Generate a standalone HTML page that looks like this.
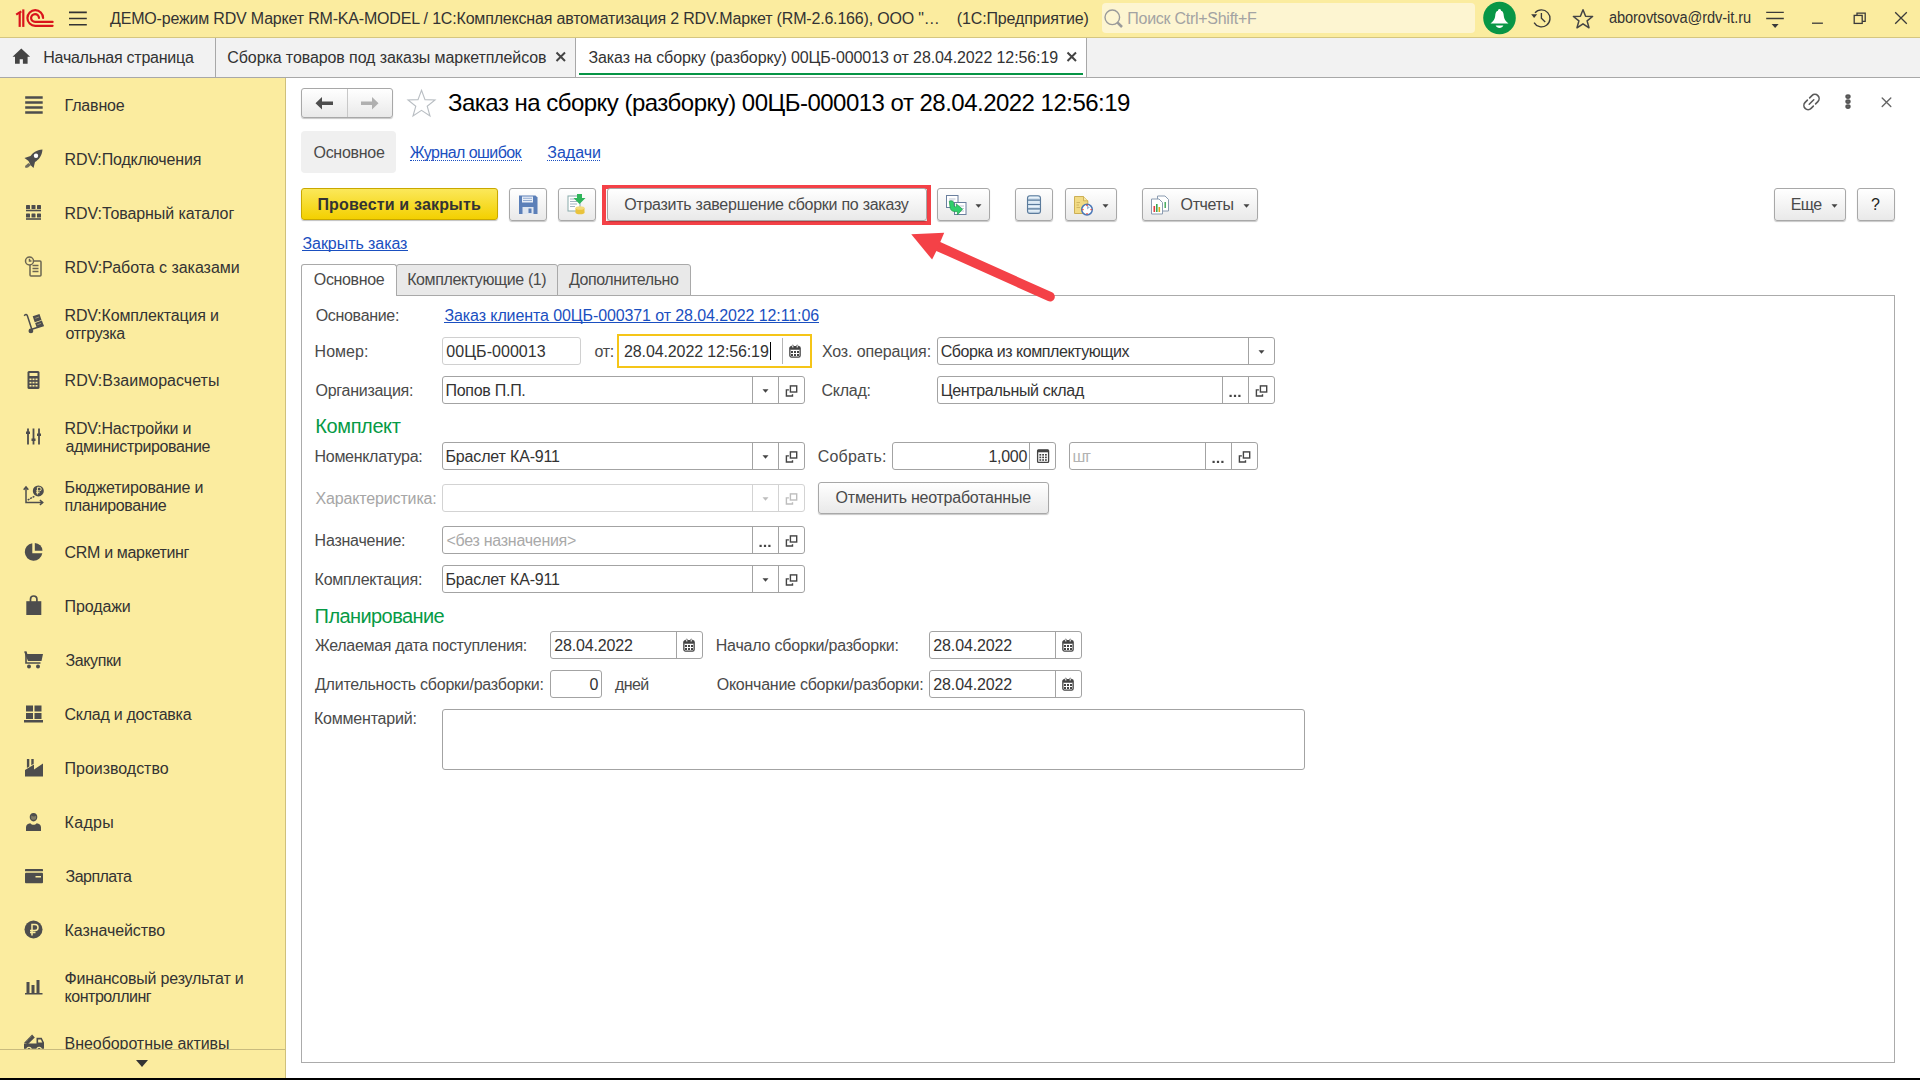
<!DOCTYPE html><html><head><meta charset="utf-8"><style>
*{box-sizing:border-box;margin:0;padding:0}
html,body{width:1920px;height:1080px;overflow:hidden;background:#fff;font-family:"Liberation Sans",sans-serif;font-size:16px;color:#4d4d4d}
.a{position:absolute}
.t{position:absolute;white-space:pre;line-height:18px;font-size:16px}
svg{position:absolute;overflow:visible}
</style></head><body>
<div class="a" style="left:0px;top:0px;width:1920px;height:37px;background:#fbec9f"></div>
<div class="a" style="left:0px;top:37px;width:1920px;height:1px;background:#d5c680"></div>
<svg style="left:0px;top:0px" width="120" height="38" viewBox="0 0 120 38">
<g fill="none" stroke="#d9141c" stroke-width="2.2">
<path d="M16.2 14.6 L21.3 11.3"/>
<path d="M19.7 12.6 V26.9"/>
<path d="M23.3 9.4 V26.9"/>
<path d="M43.1 18 A7.85 7.85 0 1 0 35.2 25.85 L52.6 25.85" stroke-linecap="round"/>
<path d="M39 18 A3.95 3.95 0 1 0 35.1 21.95 L52.6 21.95" stroke-linecap="round"/>
</g>
<g stroke="#333" stroke-width="1.6"><path d="M69 12.4H86.8M69 18.5H86.8M69 24.7H86.8"/></g>
</svg>
<div class="t" style="left:110.00px;top:10px;font-size:16px;color:#333;font-weight:400;letter-spacing:-0.182px;">ДЕМО-режим RDV Маркет RM-KA-MODEL / 1С:Комплексная автоматизация 2 RDV.Маркет (RM-2.6.166), ООО &quot;…</div>
<div class="t" style="left:956.80px;top:10px;font-size:16px;color:#333;font-weight:400;letter-spacing:-0.147px;">(1С:Предприятие)</div>
<div class="a" style="left:1102px;top:3px;width:373px;height:30px;background:#fdf5d1;border-radius:4px"></div>
<svg style="left:1100px;top:0px" width="30" height="38"><g fill="none" stroke="#9a9a9a"><circle cx="12.3" cy="17.3" r="7.3" stroke-width="1.4"/><path d="M17.6 22.6 L22 27" stroke-width="2.6"/></g></svg>
<div class="t" style="left:1127.30px;top:10px;font-size:16px;color:#a3a3a3;font-weight:400;letter-spacing:-0.271px;">Поиск Ctrl+Shift+F</div>
<svg style="left:1480px;top:0px" width="40" height="38"><circle cx="19.5" cy="18" r="16.3" fill="#089646"/>
<path d="M19.5 9 C18.5 9 18 9.8 18 10.8 C16 11.3 15.4 13 15.2 16 C15 19 13.5 21 10.5 23.6 H28.5 C25.5 21 24 19 23.8 16 C23.6 13 23 11.3 21 10.8 C21 9.8 20.5 9 19.5 9z" fill="#fff"/><path d="M15.6 25.6 H23.4 C22.7 27.3 21.2 28 19.5 28 C17.8 28 16.3 27.3 15.6 25.6z" fill="#fff"/></svg>
<svg style="left:1525px;top:0px" width="34" height="38"><g fill="none" stroke="#3a3a3a" stroke-width="1.35"><path d="M10 12.9 A8.5 8.5 0 1 1 9.1 22.6"/><path d="M16.4 13 V18.3 L20.2 22.1"/></g><path d="M6.2 14.2 L12.2 14.2 L9.1 18z" fill="#3a3a3a"/></svg>
<svg style="left:1568px;top:0px" width="32" height="38"><path d="M15 9.7 L17.6 16.3 L24.6 16.5 L19.1 20.9 L21 27.8 L15 23.8 L9 27.8 L10.9 20.9 L5.4 16.5 L12.4 16.3z" fill="none" stroke="#444" stroke-width="1.5" stroke-linejoin="round"/></svg>
<div class="t" style="left:1609.00px;top:9px;font-size:16px;color:#333;font-weight:400;letter-spacing:-0.100px;transform:scaleX(0.913);transform-origin:0 0">aborovtsova@rdv-it.ru</div>
<svg style="left:1760px;top:0px" width="32" height="38"><g stroke="#3a3a3a" stroke-width="1.4"><path d="M6.2 12.4H23.8M6.2 18.5H23.8"/></g><path d="M11.6 24 L18.6 24 L15.1 28z" fill="#3a3a3a"/></svg>
<svg style="left:1800px;top:0px" width="120" height="38"><g fill="none" stroke="#3a3a3a" stroke-width="1.3">
<path d="M12 23.2H22.9"/>
<rect x="54.2" y="15.4" width="8" height="8"/><path d="M57 15.4V13.1H65.2V21.3H62.2"/>
<path d="M95.2 12.2L106.8 23.8M106.8 12.2L95.2 23.8"/></g></svg>
<div class="a" style="left:0px;top:38px;width:1920px;height:39px;background:#f2f2f2"></div>
<div class="a" style="left:0px;top:77px;width:1920px;height:1px;background:#a8a8a8"></div>
<svg style="left:0px;top:38px" width="40" height="40"><path d="M21.3 10.6 L12.5 18.8 L15 18.8 L15 25.8 L19.7 25.8 L19.7 21.2 L22.9 21.2 L22.9 25.8 L27.6 25.8 L27.6 18.8 L30.1 18.8z" fill="#444"/></svg>
<div class="t" style="left:43.30px;top:49px;font-size:16px;color:#333;font-weight:400;letter-spacing:-0.253px;">Начальная страница</div>
<div class="a" style="left:215px;top:38px;width:1px;height:39px;background:#a8a8a8"></div>
<div class="t" style="left:227.30px;top:49px;font-size:16px;color:#333;font-weight:400;letter-spacing:-0.095px;">Сборка товаров под заказы маркетплейсов</div>
<svg style="left:550px;top:38px" width="20" height="40"><path d="M6.5 14.5L15 23M15 14.5L6.5 23" stroke="#444" stroke-width="2"/></svg>
<div class="a" style="left:575px;top:38px;width:1px;height:39px;background:#a8a8a8"></div>
<div class="a" style="left:576px;top:38px;width:510px;height:39px;background:#fff"></div>
<div class="t" style="left:588.50px;top:49px;font-size:16px;color:#333;font-weight:400;letter-spacing:-0.100px;">Заказ на сборку (разборку) 00ЦБ-000013 от 28.04.2022 12:56:19</div>
<svg style="left:1061px;top:38px" width="20" height="40"><path d="M6.5 14.5L15 23M15 14.5L6.5 23" stroke="#444" stroke-width="2"/></svg>
<div class="a" style="left:579px;top:73px;width:504px;height:2px;background:#069445"></div>
<div class="a" style="left:1086px;top:38px;width:1px;height:39px;background:#a8a8a8"></div>
<div class="a" style="left:0px;top:78px;width:285px;height:1000px;background:#fbec9f"></div>
<div class="a" style="left:285px;top:78px;width:1px;height:1000px;background:#cfc07c"></div>
<div class="t" style="left:64.60px;top:97px;font-size:16px;color:#333;font-weight:400;letter-spacing:-0.167px;">Главное</div>
<div class="t" style="left:64.60px;top:151px;font-size:16px;color:#333;font-weight:400;letter-spacing:-0.143px;">RDV:Подключения</div>
<div class="t" style="left:64.60px;top:205px;font-size:16px;color:#333;font-weight:400;letter-spacing:-0.074px;">RDV:Товарный каталог</div>
<div class="t" style="left:64.60px;top:259px;font-size:16px;color:#333;font-weight:400;letter-spacing:-0.035px;">RDV:Работа с заказами</div>
<div class="t" style="left:64.60px;top:307px;font-size:16px;color:#333;font-weight:400;letter-spacing:-0.165px;">RDV:Комплектация и</div>
<div class="t" style="left:65.60px;top:325px;font-size:16px;color:#333;font-weight:400;letter-spacing:-0.343px;">отгрузка</div>
<div class="t" style="left:64.60px;top:372px;font-size:16px;color:#333;font-weight:400;letter-spacing:0.019px;">RDV:Взаиморасчеты</div>
<div class="t" style="left:64.60px;top:420px;font-size:16px;color:#333;font-weight:400;letter-spacing:-0.186px;">RDV:Настройки и</div>
<div class="t" style="left:65.60px;top:438px;font-size:16px;color:#333;font-weight:400;letter-spacing:-0.369px;">администрирование</div>
<div class="t" style="left:64.60px;top:479px;font-size:16px;color:#333;font-weight:400;letter-spacing:-0.200px;">Бюджетирование и</div>
<div class="t" style="left:64.60px;top:497px;font-size:16px;color:#333;font-weight:400;letter-spacing:-0.391px;">планирование</div>
<div class="t" style="left:64.60px;top:544px;font-size:16px;color:#333;font-weight:400;letter-spacing:-0.336px;">CRM и маркетинг</div>
<div class="t" style="left:64.60px;top:598px;font-size:16px;color:#333;font-weight:400;letter-spacing:-0.117px;">Продажи</div>
<div class="t" style="left:65.60px;top:652px;font-size:16px;color:#333;font-weight:400;letter-spacing:-0.417px;">Закупки</div>
<div class="t" style="left:64.60px;top:706px;font-size:16px;color:#333;font-weight:400;letter-spacing:-0.280px;">Склад и доставка</div>
<div class="t" style="left:64.60px;top:760px;font-size:16px;color:#333;font-weight:400;letter-spacing:-0.027px;">Производство</div>
<div class="t" style="left:64.60px;top:814px;font-size:16px;color:#333;font-weight:400;letter-spacing:0.300px;">Кадры</div>
<div class="t" style="left:65.60px;top:868px;font-size:16px;color:#333;font-weight:400;letter-spacing:-0.543px;">Зарплата</div>
<div class="t" style="left:64.60px;top:922px;font-size:16px;color:#333;font-weight:400;letter-spacing:-0.082px;">Казначейство</div>
<div class="t" style="left:64.60px;top:970px;font-size:16px;color:#333;font-weight:400;letter-spacing:-0.195px;">Финансовый результат и</div>
<div class="t" style="left:64.60px;top:988px;font-size:16px;color:#333;font-weight:400;letter-spacing:-0.490px;">контроллинг</div>
<div class="t" style="left:64.60px;top:1035px;font-size:16px;color:#333;font-weight:400;letter-spacing:-0.067px;">Внеоборотные активы</div>
<svg style="left:0px;top:0px" width="286" height="1080"><g transform="translate(33.5,105.0)"><path d="M-8.3 -7.5H9.2M-8.3 -2.5H9.2M-8.3 2.5H9.2M-8.3 7.5H9.2" stroke="#4d4d4d" stroke-width="2.3"/></g><g transform="translate(33.5,159.0)"><path d="M9 -9.5 C3 -9 -1 -6 -3 -3 L-9 -1 L-5 2 L-3 6 L0 9 L1.5 3 C5 1 8.5 -3 9 -9.5z" fill="#4d4d4d"/><circle cx="2.5" cy="-3.3" r="2.2" fill="#fff"/><path d="M-5 4 L-8.5 7 L-8 9 L-5.5 8.5 L-2.5 6z" fill="#4d4d4d" opacity=".8"/></g><g transform="translate(33.5,213.0)"><rect x="-7.5" y="-8" width="4" height="4" rx=".6" fill="#4d4d4d"/><rect x="-2" y="-8" width="4" height="4" rx=".6" fill="#4d4d4d"/><rect x="3.5" y="-8" width="4" height="4" rx=".6" fill="#4d4d4d"/><rect x="-7.5" y="-3.3" width="15" height="1.6" fill="#4d4d4d"/><rect x="-7.5" y="0.5" width="4" height="4" rx=".6" fill="#4d4d4d"/><rect x="-2" y="0.5" width="4" height="4" rx=".6" fill="#4d4d4d"/><rect x="3.5" y="0.5" width="4" height="4" rx=".6" fill="#4d4d4d"/><rect x="-7.5" y="5.2" width="15" height="1.6" fill="#4d4d4d"/></g><g transform="translate(33.5,267.0)"><g fill="none" stroke="#6b6552" stroke-width="1.5"><rect x="-3.5" y="-6" width="11" height="15" rx="1"/><path d="M-1 -1.5H5M-1 1.5H5M-1 4.5H5"/><circle cx="-4" cy="-6" r="4" fill="#fbec9f"/><path d="M-4 -8.2V-6H-2"/></g></g><g transform="translate(33.5,323.5)"><g fill="none" stroke="#4d4d4d" stroke-width="1.5"><path d="M-9.2 -7.6 C-8.4 -9.4 -6.8 -9.2 -6.2 -8 L-1.8 5.6"/><path d="M-1.8 5.8 L10.2 2"/></g><g fill="#4d4d4d"><path d="M-0.8 -7.2 L6 -9.6 L8 -3.6 L1.2 -1.2z M1.6 -0.6 L8.4 -3 L10.2 2 L3.4 4.4z"/><circle cx="-2.6" cy="7.4" r="2.4"/></g><path d="M1.8 -5.2 L5.5 -6.5 M3.8 1.2 L7.5 -0.1" stroke="#fbec9f" stroke-width=".7" opacity=".6"/></g><g transform="translate(33.5,380.0)"><rect x="-6" y="-9" width="12" height="18" rx="1.5" fill="#4d4d4d"/><rect x="-4" y="-7" width="8" height="3" fill="#fbec9f"/><rect x="-4" y="-1.5" width="2" height="1.6" fill="#fbec9f"/><rect x="-1" y="-1.5" width="2" height="1.6" fill="#fbec9f"/><rect x="2" y="-1.5" width="2" height="1.6" fill="#fbec9f"/><rect x="-4" y="1.8" width="2" height="1.6" fill="#fbec9f"/><rect x="-1" y="1.8" width="2" height="1.6" fill="#fbec9f"/><rect x="2" y="1.8" width="2" height="1.6" fill="#fbec9f"/><rect x="-4" y="5" width="2" height="1.6" fill="#fbec9f"/><rect x="-1" y="5" width="2" height="1.6" fill="#fbec9f"/><rect x="2" y="5" width="2" height="1.6" fill="#fbec9f"/></g><g transform="translate(33.5,436.5)"><g stroke="#4d4d4d" stroke-width="1.8"><path d="M-5.5 -8V8M0 -8V8M5.5 -8V8"/></g><g fill="#4d4d4d"><rect x="-7.5" y="-5" width="4" height="2.5"/><rect x="-2" y="2" width="4" height="2.5"/><rect x="3.5" y="-3" width="4" height="2.5"/></g></g><g transform="translate(33.5,495.5)"><g fill="none" stroke="#4d4d4d" stroke-width="1.5"><path d="M-7.5 -8 V7 H9"/><path d="M-9.8 -5.8 L-7.5 -8.6 L-5.2 -5.8 M6.4 4.7 L9.2 7 L6.4 9.3"/><path d="M-5.8 4.5 L1.5 0.5" stroke-dasharray="2 .8"/></g><circle cx="4.8" cy="-4.6" r="5.5" fill="#4d4d4d"/><path d="M3.9 -1 V-8.2 H5.9 a1.8 1.8 0 0 1 0 3.6 H2.6 M2.6 -2.8 H6" stroke="#fbec9f" stroke-width="1" fill="none"/></g><g transform="translate(33.5,552.0)"><path d="M-1.2 -8.8 A8.8 8.8 0 1 0 8.8 1.2 L-1.2 1.2z" fill="#4d4d4d"/><path d="M1.3 -9 A8 8 0 0 1 9 -1.3 L1.3 -1.3z" fill="#4d4d4d"/></g><g transform="translate(33.5,606.0)"><rect x="-7.2" y="-4.8" width="15" height="13.8" fill="#4d4d4d"/><path d="M-3 -1.8 V-6.8 a3.2 3.2 0 0 1 6.4 0 V-1.8" fill="none" stroke="#4d4d4d" stroke-width="1.7"/></g><g transform="translate(33.5,660.0)"><path d="M-9.5 -8.5H-7.5L-6 -6H9.5L8 1H-5.5z" fill="#4d4d4d"/><path d="M-7.5 -8.5V3H7" stroke="#4d4d4d" stroke-width="1.6" fill="none"/><circle cx="-4.5" cy="6.5" r="2" fill="#4d4d4d"/><circle cx="4.5" cy="6.5" r="2" fill="#4d4d4d"/></g><g transform="translate(33.5,714.0)"><g fill="#4d4d4d"><rect x="-7.5" y="-8.5" width="7" height="6"/><rect x="1" y="-8.5" width="7" height="6"/><rect x="-7.5" y="-1" width="7" height="6"/><rect x="1" y="-1" width="7" height="6"/><rect x="-9.5" y="6" width="19" height="2.5"/></g></g><g transform="translate(33.5,768.0)"><path d="M-8.5 8.5 V2 L0.5 -3.5 V1.5 L9.5 -4.5 V8.5z" fill="#4d4d4d"/><path d="M-6.6 -9 H-4.2 V-1.6 L-6.6 -0.1z M-2.2 -9 H0.2 V-4.3 L-2.2 -2.8z" fill="#4d4d4d"/></g><g transform="translate(33.5,822.0)"><path d="M0 -9 C-2.6 -9 -3.8 -7.2 -3.8 -5 C-3.8 -2.6 -2.3 -0.6 0 -0.6 C2.3 -0.6 3.8 -2.6 3.8 -5 C3.8 -7.2 2.6 -9 0 -9z" fill="#4d4d4d"/><path d="M-2.2 -6.5 C-1 -5.2 1.3 -5 2.6 -6.2 L2.5 -3.5 C1.8 -1.8 -1.8 -1.8 -2.4 -3.5z" fill="#fbec9f" opacity=".3"/><path d="M-7.5 9 V5.3 C-7.5 3 -5.8 1.6 -3.2 1.2 C-2.2 2.3 -1.2 2.8 0 2.8 C1.2 2.8 2.2 2.3 3.2 1.2 C5.8 1.6 7.5 3 7.5 5.3 V9z" fill="#4d4d4d"/></g><g transform="translate(33.5,876.0)"><rect x="-8.5" y="-7" width="18" height="2.3" rx=".5" fill="#4d4d4d"/><rect x="-8.5" y="-3.2" width="18" height="10.4" rx="1" fill="#4d4d4d"/><rect x="2" y="0" width="5.5" height="1.5" fill="#fbec9f"/></g><g transform="translate(33.5,930.0)"><circle cx="0" cy="-0.5" r="9" fill="#4d4d4d"/><path d="M-1.5 5.5V-5.5H1.5a3 3 0 0 1 0 6H-3.5M-3.5 2.5H2" stroke="#fbec9f" stroke-width="1.5" fill="none"/></g><g transform="translate(33.5,986.5)"><g fill="#4d4d4d"><rect x="-7" y="-4.5" width="3" height="11"/><rect x="-2" y="-1.5" width="3" height="8"/><rect x="3" y="-6.5" width="3" height="13"/><rect x="-8.5" y="6.5" width="17.5" height="1.5"/></g></g><g transform="translate(33.5,1043.0)"><path d="M-9.5 0.5 H3 V-5.2 H8.2 L10.5 -0.5 V5.8 H-9.5z" fill="#4d4d4d"/><path d="M4.6 -3.6 H7.4 L8.8 -0.4 H4.6z" fill="#fbec9f"/><path d="M-9.4 -0.3 L-1.4 -8.6 L1.3 -5.6 L-5.6 1.2z" fill="#4d4d4d"/><path d="M-8 -0.8 L-1.6 -7.2" stroke="#fbec9f" stroke-width=".6" stroke-dasharray="1 1" opacity=".6"/><g fill="#fbec9f"><circle cx="-4.5" cy="6.4" r="2.7"/><circle cx="5.6" cy="6.4" r="2.7"/></g><g fill="#4d4d4d"><circle cx="-4.5" cy="6.6" r="1.7"/><circle cx="5.6" cy="6.6" r="1.7"/></g></g></svg>
<div class="a" style="left:0px;top:1049px;width:285px;height:29px;background:#fbec9f"></div>
<div class="a" style="left:0px;top:1049px;width:285px;height:1px;background:#c9bb7e"></div>
<svg style="left:130px;top:1055px" width="24" height="16"><path d="M6 5H18L12 12z" fill="#333"/></svg>
<div class="a" style="left:301px;top:88px;width:92px;height:30px;border:1px solid #a8a8a8;border-radius:3px;background:linear-gradient(#ffffff,#e9e9e9);box-shadow:0 1px 1px rgba(0,0,0,.22)"></div>
<div class="a" style="left:347px;top:89px;width:1px;height:28px;background:#c8c8c8"></div>
<svg style="left:301px;top:88px" width="92" height="31"><path d="M14.5 15.2 L21 9 V13.5 H32 V17 H21 V21.5z" fill="#4d4d4d"/><path d="M77.5 15.2 L71 9 V13.5 H60 V17 H71 V21.5z" fill="#b0b0b0"/></svg>
<svg style="left:405px;top:86px" width="34" height="34"><path d="M16.5 4.3 L20 13.6 L30 13.9 L22.2 20.2 L25 30 L16.5 24.4 L8 30 L10.8 20.2 L3 13.9 L13 13.6z" fill="none" stroke="#b9bec3" stroke-width="1.1" stroke-linejoin="miter"/></svg>
<div class="t" style="left:448.00px;top:94px;font-size:24px;color:#000;font-weight:400;letter-spacing:-0.517px;">Заказ на сборку (разборку) 00ЦБ-000013 от 28.04.2022 12:56:19</div>
<svg style="left:1795px;top:88px" width="100" height="30"><g fill="none" stroke="#555" stroke-width="1.6" stroke-linecap="round">
<g transform="translate(16.5,14) rotate(-45)" fill="none" stroke="#5a5a5a" stroke-width="1.6"><path d="M-1.6 -4.2 H-4.8 A4.2 4.2 0 0 0 -4.8 4.2 H-1.6"/><path d="M1.6 -4.2 H4.8 A4.2 4.2 0 0 1 4.8 4.2 H1.6"/><path d="M-3.2 0 H3.2"/></g>
<g fill="#6a6a6a"><ellipse cx="53" cy="8.6" rx="1.9" ry="1.5"/><ellipse cx="53" cy="13.6" rx="1.9" ry="1.5"/><ellipse cx="53" cy="18.6" rx="1.9" ry="1.5"/></g>
<path d="M87.2 10 L95.8 18.4 M95.8 10 L87.2 18.4" stroke="#666" stroke-width="1.4"/></svg>
<div class="a" style="left:301px;top:131px;width:95px;height:42px;background:#f0f0f0;border-radius:4px"></div>
<div class="t" style="left:313.50px;top:144px;font-size:16px;color:#4a4a4a;font-weight:400;letter-spacing:-0.286px;">Основное</div>
<div class="t" style="left:409.80px;top:144px;font-size:16px;color:#1a4fc0;font-weight:400;letter-spacing:-0.567px;">Журнал ошибок</div>
<div class="a" style="left:410px;top:160px;width:112px;height:1px;border-top:1px dotted #1a4fc0"></div>
<div class="t" style="left:547.30px;top:144px;font-size:16px;color:#1a4fc0;font-weight:400;letter-spacing:-0.020px;">Задачи</div>
<div class="a" style="left:547px;top:160px;width:53px;height:1px;border-top:1px dotted #1a4fc0"></div>
<div class="a" style="left:301px;top:188px;width:197px;height:32px;border:1px solid #c9a800;border-radius:3px;background:linear-gradient(#fbe85a,#f3d000);box-shadow:0 1px 1px rgba(0,0,0,.25)"></div>
<div class="t" style="left:317.40px;top:196px;font-size:16px;color:#333;font-weight:700;letter-spacing:0.176px;">Провести и закрыть</div>
<div class="a" style="left:509px;top:188px;width:38px;height:33px;border:1px solid #a8a8a8;border-radius:3px;background:linear-gradient(#ffffff,#e9e9e9);box-shadow:0 1px 1px rgba(0,0,0,.22)"></div>
<svg style="left:509px;top:188px" width="38" height="33"><path d="M10 7.5 H26.5 L28.5 9.5 V26 H10z" fill="#5b7fb8"/><rect x="13" y="8.5" width="11" height="6" fill="#e8eef7"/><path d="M14 10.3H23M14 12.5H23" stroke="#7d9ac6" stroke-width=".8"/><rect x="13.5" y="19" width="11" height="7" fill="#dfe6f0"/><rect x="19.5" y="20.5" width="3" height="4.5" fill="#5b7fb8"/></svg>
<div class="a" style="left:558px;top:188px;width:38px;height:33px;border:1px solid #a8a8a8;border-radius:3px;background:linear-gradient(#ffffff,#e9e9e9);box-shadow:0 1px 1px rgba(0,0,0,.22)"></div>
<svg style="left:558px;top:188px" width="38" height="33"><rect x="10" y="8" width="12" height="15" fill="#fff" stroke="#8aa" stroke-width="1"/><path d="M12 11H19M12 13.5H19M12 16H19M12 18.5H17" stroke="#9ab" stroke-width=".9"/><ellipse cx="22" cy="24.5" rx="4.5" ry="1.8" fill="#e9c33d"/><rect x="17.5" y="20" width="9" height="4.5" fill="#e9c33d"/><ellipse cx="22" cy="20" rx="4.5" ry="1.8" fill="#f3da7a"/><path d="M19 6 H24 V10 H27.5 L21.5 16 L15.5 10 H19z" fill="#2fb55a"/></svg>
<div class="a" style="left:602px;top:185px;width:329px;height:40px;border:4px solid #f44147"></div>
<div class="a" style="left:607px;top:188px;width:320px;height:33px;border:1px solid #a8a8a8;border-radius:3px;background:linear-gradient(#ffffff,#e9e9e9);box-shadow:0 1px 1px rgba(0,0,0,.22)"></div>
<div class="t" style="left:624.20px;top:196px;font-size:16px;color:#4a4a4a;font-weight:400;letter-spacing:-0.263px;">Отразить завершение сборки по заказу</div>
<div class="a" style="left:937px;top:188px;width:53px;height:33px;border:1px solid #a8a8a8;border-radius:3px;background:linear-gradient(#ffffff,#e9e9e9);box-shadow:0 1px 1px rgba(0,0,0,.22)"></div>
<svg style="left:937px;top:188px" width="53" height="33"><rect x="9.5" y="7.5" width="11.5" height="12" fill="#fff" stroke="#6a7f9e" stroke-width="1"/><path d="M12 11H18.5M12 13H17" stroke="#aab6c8" stroke-width=".8"/><rect x="17.5" y="14.5" width="11.5" height="12" fill="#fff" stroke="#6a7f9e" stroke-width="1"/><path d="M22 18H27M22 20.5H27M22 23H27" stroke="#aab6c8" stroke-width=".8"/><path d="M12.3 13.2 C14.5 12.3 16.5 13 16.7 15 L16.8 17.6 C17 18.8 18 19 19.5 18.6 L19.2 15.8 L25.5 21.2 L20.5 26.8 L20.4 23.5 C15.8 24.2 13.2 22.3 13 19z" fill="#2fcf6a" stroke="#1f9a4a" stroke-width=".7"/></svg>
<svg style="left:974.5px;top:201.6px" width="8" height="6"><path d="M0.5 2.2H6.5L3.5 5.7z" fill="#444"/></svg>
<div class="a" style="left:1015px;top:188px;width:38px;height:33px;border:1px solid #a8a8a8;border-radius:3px;background:linear-gradient(#ffffff,#e9e9e9);box-shadow:0 1px 1px rgba(0,0,0,.22)"></div>
<svg style="left:1015px;top:188px" width="38" height="33"><rect x="12.5" y="7.8" width="13" height="17.6" rx="2.5" fill="#cfe0ef" stroke="#5b7b9c" stroke-width="1.1"/><path d="M12.8 12.1H25.2M12.8 16.5H25.2M12.8 20.9H25.2" stroke="#5b7b9c" stroke-width="1.1"/><path d="M13.8 9.6H24.2M13.8 14H24.2M13.8 18.4H24.2M13.8 22.8H24.2" stroke="#f2f7fb" stroke-width=".9"/></svg>
<div class="a" style="left:1065px;top:188px;width:52px;height:33px;border:1px solid #a8a8a8;border-radius:3px;background:linear-gradient(#ffffff,#e9e9e9);box-shadow:0 1px 1px rgba(0,0,0,.22)"></div>
<svg style="left:1065px;top:188px" width="52" height="33"><path d="M9.5 8.5 H18.5 L22.8 12.8 V25.5 H9.5z" fill="#f2db84" stroke="#c7a84a" stroke-width=".9"/><path d="M18.5 8.5 V12.8 H22.8" fill="#f7e7a8" stroke="#c7a84a" stroke-width=".8"/><path d="M11.5 14.5H15M11.5 17H14M11.5 19.5H15" stroke="#c9ad5a" stroke-width=".8"/><circle cx="22" cy="21.6" r="5.3" fill="#fff" stroke="#4a78b8" stroke-width="1.5"/><path d="M22 17.6 V21.6 L24.8 19.5z" fill="#9fb7d9"/><g fill="#e43"><circle cx="22" cy="17.4" r=".8"/><circle cx="26.1" cy="21.6" r=".8"/><circle cx="22" cy="25.8" r=".8"/><circle cx="17.9" cy="21.6" r=".8"/></g></svg>
<svg style="left:1101.5px;top:201.6px" width="8" height="6"><path d="M0.5 2.2H6.5L3.5 5.7z" fill="#444"/></svg>
<div class="a" style="left:1142px;top:188px;width:116px;height:33px;border:1px solid #a8a8a8;border-radius:3px;background:linear-gradient(#ffffff,#e9e9e9);box-shadow:0 1px 1px rgba(0,0,0,.22)"></div>
<svg style="left:1142px;top:188px" width="40" height="33"><path d="M15.5 8 H23 L26.5 11.5 V23 H15.5z" fill="#fff" stroke="#8a9bb0" stroke-width="1"/><path d="M9.5 11 H17 L20.5 14.5 V26 H9.5z" fill="#fff" stroke="#8a9bb0" stroke-width="1"/><rect x="11.5" y="18" width="1.6" height="6" fill="#e03b3b"/><rect x="14" y="16" width="1.6" height="8" fill="#3aa655"/><rect x="16.5" y="19" width="1.6" height="5" fill="#d9a520"/><rect x="22.5" y="14" width="1.4" height="6" fill="#3aa655"/></svg>
<div class="t" style="left:1180.60px;top:196px;font-size:16px;color:#4a4a4a;font-weight:400;letter-spacing:-0.380px;">Отчеты</div>
<svg style="left:1242.5px;top:201.6px" width="8" height="6"><path d="M0.5 2.2H6.5L3.5 5.7z" fill="#444"/></svg>
<div class="a" style="left:1774px;top:188px;width:72px;height:33px;border:1px solid #a8a8a8;border-radius:3px;background:linear-gradient(#ffffff,#e9e9e9);box-shadow:0 1px 1px rgba(0,0,0,.22)"></div>
<div class="t" style="left:1790.80px;top:196px;font-size:16px;color:#4a4a4a;font-weight:400;letter-spacing:-0.650px;">Еще</div>
<svg style="left:1830.5px;top:201.6px" width="8" height="6"><path d="M0.5 2.2H6.5L3.5 5.7z" fill="#444"/></svg>
<div class="a" style="left:1857px;top:188px;width:38px;height:33px;border:1px solid #a8a8a8;border-radius:3px;background:linear-gradient(#ffffff,#e9e9e9);box-shadow:0 1px 1px rgba(0,0,0,.22)"></div>
<div class="t" style="left:1871.00px;top:196px;font-size:16px;color:#222;font-weight:400;letter-spacing:0.000px;">?</div>
<div class="t" style="left:302.50px;top:235px;font-size:16px;color:#1a4fc0;font-weight:400;letter-spacing:-0.067px;">Закрыть заказ</div>
<div class="a" style="left:302px;top:250px;width:106px;height:1px;background:#1a4fc0"></div>
<div class="a" style="left:301px;top:295px;width:1594px;height:768px;border:1px solid #ababab"></div>
<div class="a" style="left:301px;top:264px;width:96px;height:32px;border:1px solid #a9a9a9;border-bottom:none;border-radius:3px 3px 0 0;background:#fff"></div>
<div class="a" style="left:396px;top:264px;width:162px;height:32px;border:1px solid #a9a9a9;border-radius:3px 3px 0 0;background:#e9e9e9"></div>
<div class="a" style="left:557px;top:264px;width:134px;height:32px;border:1px solid #a9a9a9;border-radius:3px 3px 0 0;background:#e9e9e9"></div>
<div class="t" style="left:313.80px;top:271px;font-size:16px;color:#4a4a4a;font-weight:400;letter-spacing:-0.357px;">Основное</div>
<div class="t" style="left:407.20px;top:271px;font-size:16px;color:#4a4a4a;font-weight:400;letter-spacing:-0.394px;">Комплектующие (1)</div>
<div class="t" style="left:569.00px;top:271px;font-size:16px;color:#4a4a4a;font-weight:400;letter-spacing:-0.442px;">Дополнительно</div>
<div class="t" style="left:315.70px;top:307px;font-size:16px;color:#4a4a4a;font-weight:400;letter-spacing:-0.311px;">Основание:</div>
<div class="t" style="left:444.50px;top:307px;font-size:16px;color:#1a4fc0;font-weight:400;letter-spacing:-0.101px;">Заказ клиента 00ЦБ-000371 от 28.04.2022 12:11:06</div>
<div class="a" style="left:444px;top:322px;width:375px;height:1px;background:#1a4fc0"></div>
<div class="t" style="left:314.60px;top:343px;font-size:16px;color:#4a4a4a;font-weight:400;letter-spacing:0.020px;">Номер:</div>
<div class="a" style="left:442px;top:337px;width:139px;height:28px;border:1px solid #d0d0d0;border-radius:3px;background:#fff"></div>
<div class="t" style="left:446.30px;top:343px;font-size:16px;color:#333;font-weight:400;letter-spacing:0.050px;">00ЦБ-000013</div>
<div class="t" style="left:594.40px;top:343px;font-size:16px;color:#4a4a4a;font-weight:400;letter-spacing:-0.250px;">от:</div>
<div class="a" style="left:617px;top:334px;width:195px;height:34px;border:2px solid #f5c518;background:#fff"></div>
<div class="a" style="left:782px;top:338px;width:1px;height:26px;background:#b5b5b5"></div>
<svg style="left:789px;top:344px" width="14" height="14"><rect x="0.85" y="2.7" width="10.3" height="10.4" rx="1.6" fill="none" stroke="#444" stroke-width="1.3"/><rect x="0.85" y="2.7" width="10.3" height="3" rx="1" fill="#444"/><rect x="2" y="7" width="2" height="2" fill="#444"/><rect x="5" y="7" width="2" height="2" fill="#444"/><rect x="8" y="7" width="2" height="2" fill="#444"/><rect x="2" y="10" width="2" height="2" fill="#444"/><rect x="5" y="10" width="2" height="2" fill="#444"/><rect x="8" y="10" width="2" height="2" fill="#444"/><rect x="2.9" y="1.1" width="1.7" height="2.7" rx=".85" fill="#fff" stroke="#444" stroke-width=".6"/><rect x="7.4" y="1.1" width="1.7" height="2.7" rx=".85" fill="#fff" stroke="#444" stroke-width=".6"/></svg>
<div class="t" style="left:624.00px;top:343px;font-size:16px;color:#333;font-weight:400;letter-spacing:-0.111px;">28.04.2022 12:56:19</div>
<div class="a" style="left:770px;top:342px;width:1px;height:18px;background:#000"></div>
<div class="t" style="left:821.90px;top:343px;font-size:16px;color:#4a4a4a;font-weight:400;letter-spacing:-0.131px;">Хоз. операция:</div>
<div class="a" style="left:937px;top:337px;width:338px;height:28px;border:1px solid #a3a3a3;border-radius:3px;background:#fff"></div>
<div class="a" style="left:1248px;top:337px;width:1px;height:28px;background:#a3a3a3"></div>
<svg style="left:1257.5px;top:348.0px" width="8" height="6"><path d="M0.5 2.2H6.5L3.5 5.7z" fill="#444"/></svg>
<div class="t" style="left:940.70px;top:343px;font-size:16px;color:#333;font-weight:400;letter-spacing:-0.450px;">Сборка из комплектующих</div>
<div class="t" style="left:315.60px;top:382px;font-size:16px;color:#4a4a4a;font-weight:400;letter-spacing:-0.282px;">Организация:</div>
<div class="a" style="left:442px;top:376px;width:363px;height:28px;border:1px solid #a3a3a3;border-radius:3px;background:#fff"></div>
<div class="a" style="left:778px;top:376px;width:1px;height:28px;background:#a3a3a3"></div>
<svg style="left:784.5px;top:383.0px" width="14" height="14"><g fill="none" stroke="#444" stroke-width="1.4"><rect x="5.4" y="2.9" width="6.3" height="6.1"/><path d="M3.9 6.9H1.4V13H7.5V11.2"/></g></svg>
<div class="a" style="left:752px;top:376px;width:1px;height:28px;background:#a3a3a3"></div>
<svg style="left:761.5px;top:387.0px" width="8" height="6"><path d="M0.5 2.2H6.5L3.5 5.7z" fill="#444"/></svg>
<div class="t" style="left:445.50px;top:382px;font-size:16px;color:#333;font-weight:400;letter-spacing:-0.278px;">Попов П.П.</div>
<div class="t" style="left:821.50px;top:382px;font-size:16px;color:#4a4a4a;font-weight:400;letter-spacing:-0.260px;">Склад:</div>
<div class="a" style="left:937px;top:376px;width:338px;height:28px;border:1px solid #a3a3a3;border-radius:3px;background:#fff"></div>
<div class="a" style="left:1248px;top:376px;width:1px;height:28px;background:#a3a3a3"></div>
<svg style="left:1254.5px;top:383.0px" width="14" height="14"><g fill="none" stroke="#444" stroke-width="1.4"><rect x="5.4" y="2.9" width="6.3" height="6.1"/><path d="M3.9 6.9H1.4V13H7.5V11.2"/></g></svg>
<div class="a" style="left:1222px;top:376px;width:1px;height:28px;background:#a3a3a3"></div>
<svg style="left:1229.0px;top:394.0px" width="12" height="4"><g fill="#444"><rect x="0.5" y="0.8" width="2.2" height="2.2"/><rect x="4.9" y="0.8" width="2.2" height="2.2"/><rect x="9.3" y="0.8" width="2.2" height="2.2"/></g></svg>
<div class="t" style="left:940.70px;top:382px;font-size:16px;color:#333;font-weight:400;letter-spacing:-0.331px;">Центральный склад</div>
<div class="t" style="left:315.25px;top:417px;font-size:20px;color:#069a45;font-weight:400;letter-spacing:-0.379px;">Комплект</div>
<div class="t" style="left:314.60px;top:448px;font-size:16px;color:#4a4a4a;font-weight:400;letter-spacing:-0.308px;">Номенклатура:</div>
<div class="a" style="left:442px;top:442px;width:363px;height:28px;border:1px solid #a3a3a3;border-radius:3px;background:#fff"></div>
<div class="a" style="left:778px;top:442px;width:1px;height:28px;background:#a3a3a3"></div>
<svg style="left:784.5px;top:449.0px" width="14" height="14"><g fill="none" stroke="#444" stroke-width="1.4"><rect x="5.4" y="2.9" width="6.3" height="6.1"/><path d="M3.9 6.9H1.4V13H7.5V11.2"/></g></svg>
<div class="a" style="left:752px;top:442px;width:1px;height:28px;background:#a3a3a3"></div>
<svg style="left:761.5px;top:453.0px" width="8" height="6"><path d="M0.5 2.2H6.5L3.5 5.7z" fill="#444"/></svg>
<div class="t" style="left:445.50px;top:448px;font-size:16px;color:#333;font-weight:400;letter-spacing:-0.162px;">Браслет КА-911</div>
<div class="t" style="left:817.75px;top:448px;font-size:16px;color:#4a4a4a;font-weight:400;letter-spacing:0.207px;">Собрать:</div>
<div class="a" style="left:892px;top:442px;width:164px;height:28px;border:1px solid #a3a3a3;border-radius:3px;background:#fff"></div>
<div class="a" style="left:1029px;top:442px;width:1px;height:28px;background:#a3a3a3"></div>
<svg style="left:1035.5px;top:449.0px" width="14" height="14"><rect x="1.6" y="0.8" width="11" height="12.6" rx="1" fill="none" stroke="#444" stroke-width="1.3"/><rect x="1.6" y="0.8" width="11" height="2.5" fill="#444"/><rect x="3.4" y="5" width="1.8" height="1.6" fill="#444"/><rect x="6.2" y="5" width="1.8" height="1.6" fill="#444"/><rect x="9" y="5" width="1.8" height="1.6" fill="#444"/><rect x="3.4" y="7.6" width="1.8" height="1.6" fill="#444"/><rect x="6.2" y="7.6" width="1.8" height="1.6" fill="#444"/><rect x="9" y="7.6" width="1.8" height="1.6" fill="#444"/><rect x="3.4" y="10.2" width="1.8" height="1.6" fill="#444"/><rect x="6.2" y="10.2" width="1.8" height="1.6" fill="#444"/><rect x="9" y="10.2" width="1.8" height="1.6" fill="#444"/></svg>
<div class="t" style="left:892px;width:135px;text-align:right;top:448px;color:#333;letter-spacing:-0.3px">1,000</div>
<div class="a" style="left:1069px;top:442px;width:189px;height:28px;border:1px solid #a3a3a3;border-radius:3px;background:#fff"></div>
<div class="a" style="left:1231px;top:442px;width:1px;height:28px;background:#a3a3a3"></div>
<svg style="left:1237.5px;top:449.0px" width="14" height="14"><g fill="none" stroke="#444" stroke-width="1.4"><rect x="5.4" y="2.9" width="6.3" height="6.1"/><path d="M3.9 6.9H1.4V13H7.5V11.2"/></g></svg>
<div class="a" style="left:1205px;top:442px;width:1px;height:28px;background:#a3a3a3"></div>
<svg style="left:1212.0px;top:460.0px" width="12" height="4"><g fill="#444"><rect x="0.5" y="0.8" width="2.2" height="2.2"/><rect x="4.9" y="0.8" width="2.2" height="2.2"/><rect x="9.3" y="0.8" width="2.2" height="2.2"/></g></svg>
<div class="t" style="left:1072.40px;top:448px;font-size:16px;color:#b3b3b3;font-weight:400;letter-spacing:-1.800px;">шт</div>
<div class="t" style="left:315.60px;top:490px;font-size:16px;color:#a6a6a6;font-weight:400;letter-spacing:-0.157px;">Характеристика:</div>
<div class="a" style="left:442px;top:484px;width:363px;height:28px;border:1px solid #d3d3d3;border-radius:3px;background:#fff"></div>
<div class="a" style="left:778px;top:484px;width:1px;height:28px;background:#d3d3d3"></div>
<svg style="left:784.5px;top:491.0px" width="14" height="14"><g fill="none" stroke="#bdbdbd" stroke-width="1.4"><rect x="5.4" y="2.9" width="6.3" height="6.1"/><path d="M3.9 6.9H1.4V13H7.5V11.2"/></g></svg>
<div class="a" style="left:752px;top:484px;width:1px;height:28px;background:#d3d3d3"></div>
<svg style="left:761.5px;top:495.0px" width="8" height="6"><path d="M0.5 2.2H6.5L3.5 5.7z" fill="#bdbdbd"/></svg>
<div class="a" style="left:818px;top:482px;width:231px;height:32px;border:1px solid #a8a8a8;border-radius:3px;background:linear-gradient(#ffffff,#e9e9e9);box-shadow:0 1px 1px rgba(0,0,0,.22)"></div>
<div class="t" style="left:835.60px;top:489px;font-size:16px;color:#4a4a4a;font-weight:400;letter-spacing:-0.243px;">Отменить неотработанные</div>
<div class="t" style="left:314.60px;top:532px;font-size:16px;color:#4a4a4a;font-weight:400;letter-spacing:-0.240px;">Назначение:</div>
<div class="a" style="left:442px;top:526px;width:363px;height:28px;border:1px solid #a3a3a3;border-radius:3px;background:#fff"></div>
<div class="a" style="left:778px;top:526px;width:1px;height:28px;background:#a3a3a3"></div>
<svg style="left:784.5px;top:533.0px" width="14" height="14"><g fill="none" stroke="#444" stroke-width="1.4"><rect x="5.4" y="2.9" width="6.3" height="6.1"/><path d="M3.9 6.9H1.4V13H7.5V11.2"/></g></svg>
<div class="a" style="left:752px;top:526px;width:1px;height:28px;background:#a3a3a3"></div>
<svg style="left:759.0px;top:544.0px" width="12" height="4"><g fill="#444"><rect x="0.5" y="0.8" width="2.2" height="2.2"/><rect x="4.9" y="0.8" width="2.2" height="2.2"/><rect x="9.3" y="0.8" width="2.2" height="2.2"/></g></svg>
<div class="t" style="left:446.50px;top:532px;font-size:16px;color:#a9a9a9;font-weight:400;letter-spacing:-0.273px;">&lt;без назначения&gt;</div>
<div class="t" style="left:314.60px;top:571px;font-size:16px;color:#4a4a4a;font-weight:400;letter-spacing:-0.233px;">Комплектация:</div>
<div class="a" style="left:442px;top:565px;width:363px;height:28px;border:1px solid #a3a3a3;border-radius:3px;background:#fff"></div>
<div class="a" style="left:778px;top:565px;width:1px;height:28px;background:#a3a3a3"></div>
<svg style="left:784.5px;top:572.0px" width="14" height="14"><g fill="none" stroke="#444" stroke-width="1.4"><rect x="5.4" y="2.9" width="6.3" height="6.1"/><path d="M3.9 6.9H1.4V13H7.5V11.2"/></g></svg>
<div class="a" style="left:752px;top:565px;width:1px;height:28px;background:#a3a3a3"></div>
<svg style="left:761.5px;top:576.0px" width="8" height="6"><path d="M0.5 2.2H6.5L3.5 5.7z" fill="#444"/></svg>
<div class="t" style="left:445.50px;top:571px;font-size:16px;color:#333;font-weight:400;letter-spacing:-0.162px;">Браслет КА-911</div>
<div class="t" style="left:314.60px;top:607px;font-size:20px;color:#069a45;font-weight:400;letter-spacing:-0.582px;">Планирование</div>
<div class="t" style="left:315.00px;top:637px;font-size:16px;color:#4a4a4a;font-weight:400;letter-spacing:-0.320px;">Желаемая дата поступления:</div>
<div class="a" style="left:550px;top:631px;width:153px;height:28px;border:1px solid #a3a3a3;border-radius:3px;background:#fff"></div>
<div class="a" style="left:676px;top:631px;width:1px;height:28px;background:#a3a3a3"></div>
<svg style="left:683px;top:638px" width="14" height="14"><rect x="0.85" y="2.7" width="10.3" height="10.4" rx="1.6" fill="none" stroke="#444" stroke-width="1.3"/><rect x="0.85" y="2.7" width="10.3" height="3" rx="1" fill="#444"/><rect x="2" y="7" width="2" height="2" fill="#444"/><rect x="5" y="7" width="2" height="2" fill="#444"/><rect x="8" y="7" width="2" height="2" fill="#444"/><rect x="2" y="10" width="2" height="2" fill="#444"/><rect x="5" y="10" width="2" height="2" fill="#444"/><rect x="8" y="10" width="2" height="2" fill="#444"/><rect x="2.9" y="1.1" width="1.7" height="2.7" rx=".85" fill="#fff" stroke="#444" stroke-width=".6"/><rect x="7.4" y="1.1" width="1.7" height="2.7" rx=".85" fill="#fff" stroke="#444" stroke-width=".6"/></svg>
<div class="t" style="left:554.20px;top:637px;font-size:16px;color:#333;font-weight:400;letter-spacing:-0.144px;">28.04.2022</div>
<div class="t" style="left:715.70px;top:637px;font-size:16px;color:#4a4a4a;font-weight:400;letter-spacing:-0.200px;">Начало сборки/разборки:</div>
<div class="a" style="left:929px;top:631px;width:153px;height:28px;border:1px solid #a3a3a3;border-radius:3px;background:#fff"></div>
<div class="a" style="left:1055px;top:631px;width:1px;height:28px;background:#a3a3a3"></div>
<svg style="left:1062px;top:638px" width="14" height="14"><rect x="0.85" y="2.7" width="10.3" height="10.4" rx="1.6" fill="none" stroke="#444" stroke-width="1.3"/><rect x="0.85" y="2.7" width="10.3" height="3" rx="1" fill="#444"/><rect x="2" y="7" width="2" height="2" fill="#444"/><rect x="5" y="7" width="2" height="2" fill="#444"/><rect x="8" y="7" width="2" height="2" fill="#444"/><rect x="2" y="10" width="2" height="2" fill="#444"/><rect x="5" y="10" width="2" height="2" fill="#444"/><rect x="8" y="10" width="2" height="2" fill="#444"/><rect x="2.9" y="1.1" width="1.7" height="2.7" rx=".85" fill="#fff" stroke="#444" stroke-width=".6"/><rect x="7.4" y="1.1" width="1.7" height="2.7" rx=".85" fill="#fff" stroke="#444" stroke-width=".6"/></svg>
<div class="t" style="left:933.30px;top:637px;font-size:16px;color:#333;font-weight:400;letter-spacing:-0.133px;">28.04.2022</div>
<div class="t" style="left:315.00px;top:676px;font-size:16px;color:#4a4a4a;font-weight:400;letter-spacing:-0.239px;">Длительность сборки/разборки:</div>
<div class="a" style="left:550px;top:670px;width:52px;height:28px;border:1px solid #a3a3a3;border-radius:3px;background:#fff"></div>
<div class="t" style="left:550px;width:48px;text-align:right;top:676px;color:#333;letter-spacing:-0.3px">0</div>
<div class="t" style="left:615.00px;top:676px;font-size:16px;color:#4a4a4a;font-weight:400;letter-spacing:-0.567px;">дней</div>
<div class="t" style="left:716.70px;top:676px;font-size:16px;color:#4a4a4a;font-weight:400;letter-spacing:-0.248px;">Окончание сборки/разборки:</div>
<div class="a" style="left:929px;top:670px;width:153px;height:28px;border:1px solid #a3a3a3;border-radius:3px;background:#fff"></div>
<div class="a" style="left:1055px;top:670px;width:1px;height:28px;background:#a3a3a3"></div>
<svg style="left:1062px;top:677px" width="14" height="14"><rect x="0.85" y="2.7" width="10.3" height="10.4" rx="1.6" fill="none" stroke="#444" stroke-width="1.3"/><rect x="0.85" y="2.7" width="10.3" height="3" rx="1" fill="#444"/><rect x="2" y="7" width="2" height="2" fill="#444"/><rect x="5" y="7" width="2" height="2" fill="#444"/><rect x="8" y="7" width="2" height="2" fill="#444"/><rect x="2" y="10" width="2" height="2" fill="#444"/><rect x="5" y="10" width="2" height="2" fill="#444"/><rect x="8" y="10" width="2" height="2" fill="#444"/><rect x="2.9" y="1.1" width="1.7" height="2.7" rx=".85" fill="#fff" stroke="#444" stroke-width=".6"/><rect x="7.4" y="1.1" width="1.7" height="2.7" rx=".85" fill="#fff" stroke="#444" stroke-width=".6"/></svg>
<div class="t" style="left:933.30px;top:676px;font-size:16px;color:#333;font-weight:400;letter-spacing:-0.133px;">28.04.2022</div>
<div class="t" style="left:314.00px;top:710px;font-size:16px;color:#4a4a4a;font-weight:400;letter-spacing:-0.218px;">Комментарий:</div>
<div class="a" style="left:442px;top:709px;width:863px;height:61px;border:1px solid #a3a3a3;border-radius:3px;background:#fff"></div>
<svg style="left:0px;top:0px" width="1920" height="1080"><path d="M938.3 246.5 L1050 296.7" stroke="#f44147" stroke-width="9.6" stroke-linecap="round"/><path d="M911.25 234.2 L944.2 232.7 L940.4 241.7 L936.25 251.25 L932.1 259.6z" fill="#f44147"/></svg>
<div class="a" style="left:0px;top:1078px;width:1920px;height:2px;background:#000"></div>
</body></html>
